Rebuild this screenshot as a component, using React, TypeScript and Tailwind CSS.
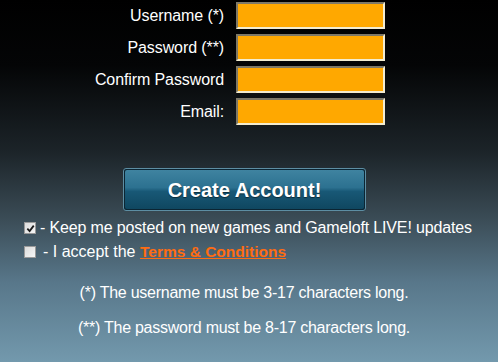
import { useState } from "react"

const FIELDS = [
  { label: "Username (*)", type: "text" },
  { label: "Password (**)", type: "password" },
  { label: "Confirm Password", type: "password" },
  { label: "Email:", type: "text" },
]

function CheckBox({ checked, onChange }: { checked: boolean; onChange: () => void }) {
  return (
    <button
      type="button"
      onClick={onChange}
      className="w-[12px] h-[12px] border border-[#9a9a9a] bg-gradient-to-br from-[#dcdcdc] to-[#f6f6f6] flex items-center justify-center p-0"
    >
      {checked && (
        <svg viewBox="0 0 10 10" className="w-[9px] h-[9px]">
          <path d="M1.5 5.2 L4 7.8 L8.6 1.8" fill="none" stroke="#1a1a1a" strokeWidth="2" />
        </svg>
      )}
    </button>
  )
}

export default function App() {
  const [newsletter, setNewsletter] = useState(true)
  const [terms, setTerms] = useState(false)

  return (
    <div className="w-[498px] h-[362px] overflow-hidden font-['Liberation_Sans',Arial,sans-serif] text-white bg-[linear-gradient(to_bottom,#000_0%,#040506_18%,#1c2429_42%,#3a4b55_60%,#58778a_78%,#7399ad_100%)]">
      {/* Form fields */}
      <div className="grid grid-cols-[224px_149px] gap-x-[12px] gap-y-[5px] pt-[2px]">
        {FIELDS.map((f) => (
          <div key={f.label} className="contents">
            <label className="text-right text-[16px] leading-[27px] tracking-[-0.1px]">{f.label}</label>
            <input
              type={f.type}
              className="h-[27px] bg-[#ffa800] border-2 border-t-[#7d7868] border-l-[#7d7868] border-b-[#f3ecd0] border-r-[#f3ecd0] outline-none px-1 text-black"
            />
          </div>
        ))}
      </div>

      {/* Submit */}
      <div className="mt-[43px] ml-[123px] w-[243px] h-[43px] rounded-[3px] border border-[#5d8ea3] bg-[#0b2533] p-[1px]">
        <button
          type="button"
          className="w-full h-full rounded-[2px] bg-[linear-gradient(to_bottom,#3f83a0_0%,#2c7190_45%,#185876_55%,#0f4760_100%)] text-white font-bold text-[20px] [text-shadow:0_1px_1px_rgba(0,0,0,0.5)]"
        >
          Create Account!
        </button>
      </div>

      {/* Options */}
      <div className="mt-[9px] ml-[24px] flex flex-col gap-[8px] text-[16px] leading-[16px]">
        <div className="flex items-center gap-[4px]">
          <CheckBox checked={newsletter} onChange={() => setNewsletter(!newsletter)} />
          <span className="tracking-[-0.15px]">- Keep me posted on new games and Gameloft LIVE! updates</span>
        </div>
        <div className="flex items-center gap-[7px]">
          <CheckBox checked={terms} onChange={() => setTerms(!terms)} />
          <span>
            - I accept the{" "}
            <a href="#" className="font-bold text-[15.5px] text-[#ff6c12] underline">
              Terms &amp; Conditions
            </a>
          </span>
        </div>
      </div>

      {/* Notes */}
      <div className="mt-[25px] flex flex-col items-center gap-[19px] text-[16px] leading-[16px] tracking-[-0.25px] pr-[10px]">
        <p>(*) The username must be 3-17 characters long.</p>
        <p>(**) The password must be 8-17 characters long.</p>
      </div>
    </div>
  )
}
